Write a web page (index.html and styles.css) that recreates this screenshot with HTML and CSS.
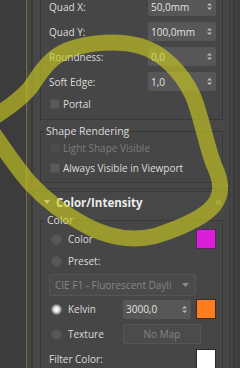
FILE: index.html
```html
<!DOCTYPE html>
<html>
<head>
<meta charset="utf-8">
<link rel="stylesheet" href="styles.css">
</head>
<body>
<div class="app">
  <div class="side"></div>
  <div class="main">
    <div class="rollouts">
      <div class="rollout r1">
        <div class="group g1">
          <div class="grid">
            <span class="lbl">Quad X:</span>
            <div class="spin"><span>50,0mm</span><svg class="arr" width="5" height="9" viewBox="0 0 5 9"><path d="M0 3.5 L2.5 1 L5 3.5Z M0 5.5 L2.5 8 L5 5.5Z"/></svg></div>
            <span class="lbl">Quad Y:</span>
            <div class="spin"><span>100,0mm</span><svg class="arr" width="5" height="9" viewBox="0 0 5 9"><path d="M0 3.5 L2.5 1 L5 3.5Z M0 5.5 L2.5 8 L5 5.5Z"/></svg></div>
            <span class="lbl">Roundness:</span>
            <div class="spin"><span>0,0</span><svg class="arr" width="5" height="9" viewBox="0 0 5 9"><path d="M0 3.5 L2.5 1 L5 3.5Z M0 5.5 L2.5 8 L5 5.5Z"/></svg></div>
            <span class="lbl">Soft Edge:</span>
            <div class="spin"><span>1,0</span><svg class="arr" width="5" height="9" viewBox="0 0 5 9"><path d="M0 3.5 L2.5 1 L5 3.5Z M0 5.5 L2.5 8 L5 5.5Z"/></svg></div>
          </div>
          <div class="chk portal"><span class="box"></span>Portal</div>
        </div>
        <fieldset class="group g2">
          <legend>Shape Rendering</legend>
          <div class="chk dis"><span class="box"></span>Light Shape Visible</div>
          <div class="chk"><span class="box"></span>Always Visible in Viewport</div>
        </fieldset>
      </div>
      <div class="rollout r2">
        <div class="head"><span class="tri"></span><b>Color/Intensity</b><span class="grip"></span></div>
        <fieldset class="group g3">
          <legend>Color</legend>
          <div class="crow r-color"><span class="radio"></span><span>Color</span><span class="sw magenta"></span></div>
          <div class="crow r-preset"><span class="radio"></span><span>Preset:</span></div>
          <div class="crow r-drop"><div class="drop"><span>CIE F1 - Fluorescent Dayli</span><svg width="7" height="4" viewBox="0 0 7 4"><path d="M0 0 L7 0 L3.5 4Z"/></svg></div></div>
          <div class="crow r-kelvin"><span class="radio on"></span><span>Kelvin</span><div class="spin"><span>3000,0</span><svg class="arr" width="5" height="9" viewBox="0 0 5 9"><path d="M0 3.5 L2.5 1 L5 3.5Z M0 5.5 L2.5 8 L5 5.5Z"/></svg></div><span class="sw orange"></span></div>
          <div class="crow r-tex"><span class="radio"></span><span>Texture</span><div class="btn">No Map</div></div>
          <div class="crow r-filter"><span class="flbl">Filter Color:</span><span class="sw white"></span></div>
        </fieldset>
      </div>
    </div>
    <div class="gap"></div>
    <div class="track"></div>
  </div>
  <svg class="ink" width="240" height="368" viewBox="0 0 240 368">
    <path d="M-12 121 C 5 110 20 100 30 88 C 40 74 48 58 68 50 C 90 42 118 40 140 46 C 162 52 182 72 193 96 C 202 118 206 145 214 165 C 220 178 224 192 214 205 C 204 218 180 228 155 236 C 130 242 105 236 85 225 C 60 212 42 196 30 183 C 15 166 4 148 -8 132"/>
  </svg>
</div>
</body>
</html>
```

FILE: styles.css
```css
html, body {
  margin: 0;
  padding: 0;
}
body {
  width: 240px;
  height: 368px;
  overflow: hidden;
  background: #444444;
  font-family: "Open Sans", "Noto Sans", sans-serif;
  font-size: 10px;
  color: #dcdcdc;
}
.app {
  position: relative;
  display: flex;
  height: 368px;
  overflow: hidden;
}
.side {
  width: 26px;
  background: #3c3c3c;
  border-right: 1px solid #7f6d3c;
}
.main {
  flex: 1;
  display: flex;
  background: #454545;
  padding-left: 4px;
}
.rollouts {
  width: 199px;
  display: flex;
  flex-direction: column;
}
.rollout {
  box-sizing: border-box;
  background: #474747;
  border-left: 2px solid #3a3a3a;
  border-right: 1px solid #3a3a3a;
  padding: 0 6px 0 7px;
}
.r1 {
  border-bottom: 1px solid #3a3a3a;
  padding-bottom: 5px;
}
.r2 {
  margin-top: 2px;
  border-top: 1px solid #3a3a3a;
  flex: 1;
}
.gap {
  width: 3px;
}
.track {
  flex: 1;
  background: #3f3f3f;
  border-left: 1px solid #373737;
}
.group {
  box-sizing: border-box;
  width: 183px;
  margin: 0;
  border: 1px solid #383838;
  background: #464646;
}
.g1 {
  border-top: none;
  padding: 0 6px 8px 8px;
}
.grid {
  margin-top: -3px;
  display: grid;
  grid-template-columns: 1fr 68px;
  grid-auto-rows: 19px;
  row-gap: 6px;
  align-items: center;
}
.spin {
  box-sizing: border-box;
  height: 19px;
  background: #575757;
  border-radius: 2px;
  display: flex;
  align-items: center;
  justify-content: space-between;
  padding: 0 4px 0 3px;
  color: #e2e2e2;
}
.arr path {
  fill: #bdbdbd;
}
.chk {
  display: flex;
  align-items: center;
  gap: 3px;
  height: 14px;
}
.box {
  box-sizing: border-box;
  width: 10px;
  height: 10px;
  background: #5a5a5a;
  border: 1px solid #4e4e4e;
}
.portal {
  margin-top: 6px;
  padding-left: 1px;
}
.g2 {
  margin-top: 4px;
  padding: 3px 0 7px 9px;
}
legend {
  padding: 0 2px;
  line-height: 14px;
  font-size: 10.5px;
  color: #dcdcdc;
}
.g2 legend {
  margin-left: -6px;
}
.g3 legend {
  margin-left: -6px;
}
.g2 .chk + .chk {
  margin-top: 6px;
}
.dis {
  color: #7c7c7c;
}
.dis .box {
  background: #4c4c4c;
  border-color: #484848;
}
.head {
  height: 20px;
  display: flex;
  align-items: center;
  padding-left: 4px;
}
.tri {
  width: 0;
  height: 0;
  border-left: 3px solid transparent;
  border-right: 3px solid transparent;
  border-top: 4px solid #d0d0d0;
  margin-right: 6px;
}
.head b {
  font-size: 11.5px;
  color: #ececec;
  flex: 1;
}
.grip {
  width: 5px;
  height: 5px;
  margin-right: 2px;
  background-image: radial-gradient(circle, #8a8a8a 0.6px, transparent 0.8px);
  background-size: 2px 2px;
}
.g3 {
  margin-top: 1px;
  padding: 2px 6px 0 10px;
  display: flex;
  flex-direction: column;
}
.crow {
  display: grid;
  grid-template-columns: 17px 55px 73px 20px;
  align-items: center;
  height: 20px;
}
.r-preset { margin-top: 2px; }
.r-drop { margin-top: 3px; height: 22px; display: flex; margin-left: -2px; }
.r-kelvin { margin-top: 3px; }
.r-tex { margin-top: 5px; }
.r-filter { margin-top: 5px; margin-left: -2px; grid-template-columns: 147px 20px; }
.radio {
  box-sizing: border-box;
  width: 11px;
  height: 11px;
  border-radius: 50%;
  background: #575757;
  border: 1px solid #4f4f4f;
}
.radio.on {
  background: radial-gradient(circle, #ffffff 0, #f2f2f2 2px, #a8a8a8 4px, #8c8c8c 6px);
  border-color: #777;
}
.sw {
  box-sizing: border-box;
  width: 20px;
  height: 20px;
  border: 1px solid #2c2c2c;
  grid-column: 4;
}
.r-filter .sw { grid-column: 2; }
.magenta { background: #dc1edc; border-color: #5b2460; }
.orange { background: #fe7d20; border-color: #3a2a20; }
.white { background: #ffffff; border-color: #2a2a2a; }
.drop {
  box-sizing: border-box;
  width: 147px;
  height: 22px;
  border: 1px solid #555555;
  background: #4a4a4a;
  border-radius: 2px;
  display: flex;
  align-items: center;
  justify-content: space-between;
  padding: 0 6px 0 5px;
  color: #868686;
}
.drop path { fill: #8c8c8c; }
.r-kelvin .spin { width: 68px; }
.btn {
  grid-column: 3 / span 2;
  box-sizing: border-box;
  width: 78px;
  height: 20px;
  border: 1px solid #555555;
  background: #4b4b4b;
  border-radius: 2px;
  color: #858585;
  display: flex;
  align-items: center;
  justify-content: center;
}
.flbl { color: #dcdcdc; }
.ink {
  position: absolute;
  left: 0;
  top: 0;
  pointer-events: none;
}
.ink path {
  fill: none;
  stroke: rgba(205, 205, 30, 0.62);
  stroke-width: 16;
  stroke-linecap: round;
  stroke-linejoin: round;
}
```
